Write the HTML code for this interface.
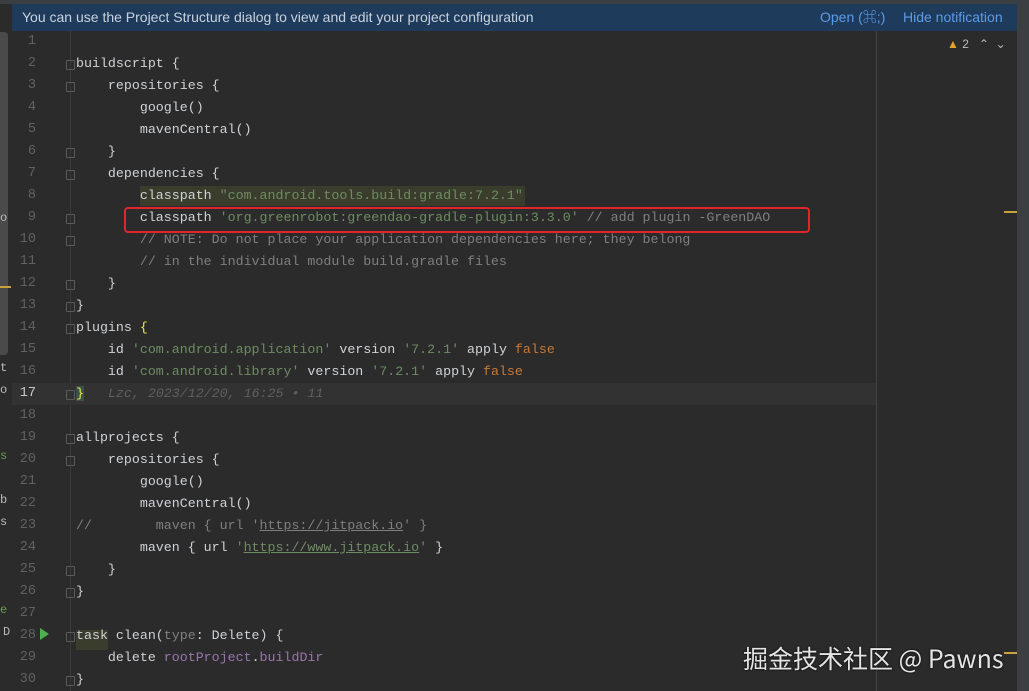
<!DOCTYPE html>
<html><head><meta charset="utf-8"><style>
body{margin:0;width:1029px;height:691px;background:#2b2b2b;overflow:hidden;position:relative;font-family:"Liberation Sans","Noto Sans CJK SC",sans-serif}
.top{position:absolute;left:0;top:0;width:1029px;height:4px;background:#3c3f41}
.ban{position:absolute;left:12px;top:4px;width:1005px;height:27px;background:#1f3b5c;color:#c8d2de;font-size:14px;line-height:26px}
.ban .m{position:absolute;left:10px}
.ban .a{position:absolute;color:#5c9be6}
.ls{position:absolute;left:0;top:31px;width:12px;height:660px;background:#2b2b2b}
.lb{position:absolute;left:0;top:32px;width:8px;height:323px;background:#4a4a4a;border-radius:0 4px 4px 0}
.rs{position:absolute;left:1017px;top:0;width:12px;height:691px;background:#3c3f41}
.ln{position:absolute;left:14px;width:22px;text-align:right;font:13.5px "Liberation Mono",monospace;color:#5f6163;line-height:22px}
.c{position:absolute;left:76px;font:13.3px "Liberation Mono",monospace;color:#cfd2d6;line-height:22px;white-space:pre}
.s{color:#6f8b63}.cm{color:#7f7f7f}.o{color:#cc7832}.p{color:#9876aa}.u{text-decoration:underline}
.f{position:absolute;left:66px;width:7px;height:8px;border:1px solid #5a5a5a;border-radius:1px}
.vl{position:absolute;left:70px;top:31px;width:1px;height:660px;background:#3a3a3a}
.rm{position:absolute;left:876px;top:31px;width:1px;height:660px;background:#444}
.lt{position:absolute;left:0;font:12px "Liberation Mono",monospace;color:#bbb;line-height:22px}
</style></head><body>
<div class="top"></div>
<div class="ban"><span class="m">You can use the Project Structure dialog to view and edit your project configuration</span><span class="a" style="left:808px">Open (⌘;)</span><span class="a" style="left:891px">Hide notification</span></div>
<div class="ls"></div><div class="lb"></div>
<div class="lt" style="top:207px">o</div><div class="lt" style="top:357px">t</div><div class="lt" style="top:379px">o</div><div class="lt" style="top:445px;color:#6a9c4c">s</div><div class="lt" style="top:489px">b</div><div class="lt" style="top:511px">s</div><div class="lt" style="top:599px;color:#6a9c4c">e</div><div class="lt" style="top:621px;left:3px">D</div>
<div style="position:absolute;left:0;top:286px;width:11px;height:2px;background:#c9a23c"></div>
<div class="rs"></div>
<div class="vl"></div><div class="rm"></div>
<div style="position:absolute;left:12px;top:383px;width:864px;height:22px;background:#323232"></div>
<div style="position:absolute;left:140px;top:186px;width:385px;height:20px;background:#3b3d2c"></div>
<div style="position:absolute;left:76px;top:630px;width:32px;height:20px;background:#3b3d2c"></div>
<div style="position:absolute;left:124px;top:207px;width:682px;height:22px;border:2px solid #e0262b;border-radius:4px"></div>
<div style="position:absolute;left:947px;top:37px;font-size:12px;color:#bbb"><span style="color:#e0a32e">▲</span> 2 &nbsp;&nbsp;⌃ &nbsp;⌄</div>
<div style="position:absolute;left:1004px;top:211px;width:13px;height:2px;background:#c9a23c"></div>
<div style="position:absolute;left:1004px;top:652px;width:13px;height:2px;background:#c9a23c"></div>
<div style="position:absolute;left:40px;top:628px;width:0;height:0;border-left:9px solid #4caf50;border-top:6px solid transparent;border-bottom:6px solid transparent"></div>
<div class="f" style="top:60px"></div><div class="f" style="top:82px"></div><div class="f" style="top:148px"></div><div class="f" style="top:170px"></div><div class="f" style="top:214px"></div><div class="f" style="top:236px"></div><div class="f" style="top:280px"></div><div class="f" style="top:302px"></div><div class="f" style="top:324px"></div><div class="f" style="top:390px"></div><div class="f" style="top:434px"></div><div class="f" style="top:456px"></div><div class="f" style="top:566px"></div><div class="f" style="top:588px"></div><div class="f" style="top:632px"></div><div class="f" style="top:676px"></div>
<div class="ln" style="top:31px">1</div><div class="ln" style="top:53px">2</div><div class="ln" style="top:75px">3</div><div class="ln" style="top:97px">4</div><div class="ln" style="top:119px">5</div><div class="ln" style="top:141px">6</div><div class="ln" style="top:163px">7</div><div class="ln" style="top:185px">8</div><div class="ln" style="top:207px">9</div><div class="ln" style="top:229px">10</div><div class="ln" style="top:251px">11</div><div class="ln" style="top:273px">12</div><div class="ln" style="top:295px">13</div><div class="ln" style="top:317px">14</div><div class="ln" style="top:339px">15</div><div class="ln" style="top:361px">16</div><div class="ln" style="top:383px;color:#c8c8c8">17</div><div class="ln" style="top:405px">18</div><div class="ln" style="top:427px">19</div><div class="ln" style="top:449px">20</div><div class="ln" style="top:471px">21</div><div class="ln" style="top:493px">22</div><div class="ln" style="top:515px">23</div><div class="ln" style="top:537px">24</div><div class="ln" style="top:559px">25</div><div class="ln" style="top:581px">26</div><div class="ln" style="top:603px">27</div><div class="ln" style="top:625px">28</div><div class="ln" style="top:647px">29</div><div class="ln" style="top:669px">30</div>
<div class="c" style="top:53px">buildscript {</div>
<div class="c" style="top:75px">    repositories {</div>
<div class="c" style="top:97px">        google()</div>
<div class="c" style="top:119px">        mavenCentral()</div>
<div class="c" style="top:141px">    }</div>
<div class="c" style="top:163px">    dependencies {</div>
<div class="c" style="top:185px">        classpath <span class="s">"com.android.tools.build:gradle:7.2.1"</span></div>
<div class="c" style="top:207px">        classpath <span class="s">'org.greenrobot:greendao-gradle-plugin:3.3.0'</span> <span class="cm">// add plugin -GreenDAO</span></div>
<div class="c cm" style="top:229px">        // NOTE: Do not place your application dependencies here; they belong</div>
<div class="c cm" style="top:251px">        // in the individual module build.gradle files</div>
<div class="c" style="top:273px">    }</div>
<div class="c" style="top:295px">}</div>
<div class="c" style="top:317px">plugins <span style="color:#e8e84a">{</span></div>
<div class="c" style="top:339px">    id <span class="s">'com.android.application'</span> version <span class="s">'7.2.1'</span> apply <span class="o">false</span></div>
<div class="c" style="top:361px">    id <span class="s">'com.android.library'</span> version <span class="s">'7.2.1'</span> apply <span class="o">false</span></div>
<div class="c" style="top:383px"><span style="color:#e8e84a;background:#3b514d">}</span>   <span class="cm" style="font-style:italic;color:#5e6060">Lzc, 2023/12/20, 16:25 • 11</span></div>
<div class="c" style="top:427px">allprojects {</div>
<div class="c" style="top:449px">    repositories {</div>
<div class="c" style="top:471px">        google()</div>
<div class="c" style="top:493px">        mavenCentral()</div>
<div class="c cm" style="top:515px">//        maven { url '<span class="u">https://jitpack.io</span>' }</div>
<div class="c" style="top:537px">        maven { url <span class="s">'<span class="u">https://www.jitpack.io</span>'</span> }</div>
<div class="c" style="top:559px">    }</div>
<div class="c" style="top:581px">}</div>
<div class="c" style="top:625px">task clean(<span class="cm">type</span>: Delete) {</div>
<div class="c" style="top:647px">    delete <span class="p">rootProject</span>.<span class="p">buildDir</span></div>
<div class="c" style="top:669px">}</div>
<div style="position:absolute;left:743px;top:640px;font-size:25px;color:#e4e4e4;font-family:'Noto Sans CJK SC','Liberation Sans',sans-serif;text-shadow:0 0 2px #000">掘金技术社区 @ Pawns</div>
</body></html>
